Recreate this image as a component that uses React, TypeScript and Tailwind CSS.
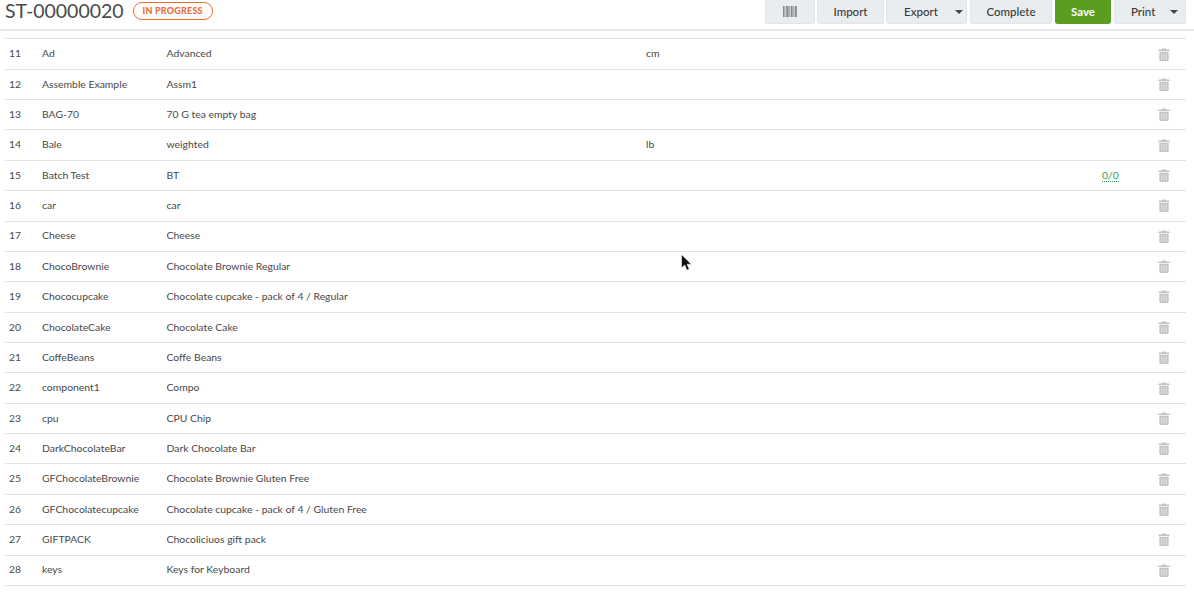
import React from "react";

const rows: [number, string, string, string?, boolean?][] = [
  [11, "Ad", "Advanced", "cm"],
  [12, "Assemble Example", "Assm1"],
  [13, "BAG-70", "70 G tea empty bag"],
  [14, "Bale", "weighted", "lb"],
  [15, "Batch Test", "BT", undefined, true],
  [16, "car", "car"],
  [17, "Cheese", "Cheese"],
  [18, "ChocoBrownie", "Chocolate Brownie Regular"],
  [19, "Chococupcake", "Chocolate cupcake - pack of 4 / Regular"],
  [20, "ChocolateCake", "Chocolate Cake"],
  [21, "CoffeBeans", "Coffe Beans"],
  [22, "component1", "Compo"],
  [23, "cpu", "CPU Chip"],
  [24, "DarkChocolateBar", "Dark Chocolate Bar"],
  [25, "GFChocolateBrownie", "Chocolate Brownie Gluten Free"],
  [26, "GFChocolatecupcake", "Chocolate cupcake - pack of 4 / Gluten Free"],
  [27, "GIFTPACK", "Chocoliciuos gift pack"],
  [28, "keys", "Keys for Keyboard"],
];

function Trash() {
  return (
    <svg width="12" height="13" viewBox="0 0 12 14" className="block" fill="#c4c4c4">
      <path d="M4 0.5h4l.6 1.2H11.5a.5.5 0 0 1 .5.5V3.2H0V2.2a.5.5 0 0 1 .5-.5H3.4z" />
      <path d="M1 4h10v8.6A1.4 1.4 0 0 1 9.6 14H2.4A1.4 1.4 0 0 1 1 12.6z" />
      <rect x="3.2" y="5.5" width="0.8" height="7" fill="#ececec" />
      <rect x="5.6" y="5.5" width="0.8" height="7" fill="#ececec" />
      <rect x="8" y="5.5" width="0.8" height="7" fill="#ececec" />
    </svg>
  );
}

function Caret() {
  return <span className="w-0 h-0 border-x-[4px] border-x-transparent border-t-[4px] border-t-[#444]" />;
}

function Barcode() {
  return (
    <svg width="14" height="11" viewBox="0 0 14 11" className="block">
      {[0, 1.5, 3, 4, 5.5, 6.5, 8, 9.5, 10.5, 12, 13].map((x, i) => (
        <rect key={i} x={x} y="0" width={i % 3 === 0 ? 1.2 : 0.8} height="11" fill="#8a8a8a" />
      ))}
    </svg>
  );
}

const btn =
  "h-[24px] rounded-b-[3px] bg-[#e9edf0] border border-t-0 border-[#e1e5e8] flex items-center text-[#3a3a3a] text-[11.5px] font-medium";

export default function App() {
  return (
    <div className="w-[1194px] h-[592px] overflow-hidden bg-white font-['Lato','Liberation_Sans',sans-serif] text-[#484848]">
      <header className="h-[31px] border-b-2 border-[#e4e8eb] flex items-start pl-[5px] pr-[8px]">
        <h1 className="text-[19.5px] leading-[22px] font-normal text-[#4a4a4a]">ST-00000020</h1>
        <span className="ml-[9px] mt-[2px] h-[18px] w-[80px] justify-center rounded-[9px] border border-[#e8703a] bg-white text-[#e4703c] text-[9px] font-black tracking-[0.2px] flex items-center">
          IN PROGRESS
        </span>
        <div className="ml-auto flex">
          <button className={btn + " w-[50px] justify-center"}><Barcode /></button>
          <button className={btn + " w-[67px] ml-[2px] justify-center"}>Import</button>
          <button className={btn + " w-[81px] ml-[2px] pl-[17px] gap-[17px]"}>Export<Caret /></button>
          <button className={btn + " w-[82px] ml-[3px] justify-center"}>Complete</button>
          <button className="h-[24px] w-[56px] ml-[3px] rounded-b-[3px] bg-[#5a9e21] text-white text-[11.5px] font-bold flex items-center justify-center">Save</button>
          <button className={btn + " w-[72px] ml-[3px] pl-[16px] gap-[15px]"}>Print<Caret /></button>
        </div>
      </header>
      <div className="mt-[7.4px] ml-[5px] w-[1181px] border-t border-[#dfe4e8]">
        {rows.map(([n, sku, name, unit, ok]) => (
          <div key={n} className="h-[30.37px] border-b border-[#dfe4e8] flex items-center text-[10.4px]">
            <div className="w-[37px] pl-[4px]">{n}</div>
            <div className="w-[124.5px]">{sku}</div>
            <div className="w-[479.5px]">{name}</div>
            <div className="w-[456px]">{unit}</div>
            <div className="w-[56px]">
              {ok && <span className="text-[#2e9e5b] border-b border-dotted border-[#2e9e5b] leading-[11px] inline-block">0/0</span>}
            </div>
            <div><Trash /></div>
          </div>
        ))}
      </div>
      <svg className="absolute left-[681px] top-[254px]" width="12" height="18" viewBox="0 0 12 18">
        <path d="M0.5 0.5V14l3.2-3 2.2 5.2 2.4-1-2.2-5h4.3z" fill="#111" stroke="#fff" strokeWidth="0.6" />
      </svg>
    </div>
  );
}
